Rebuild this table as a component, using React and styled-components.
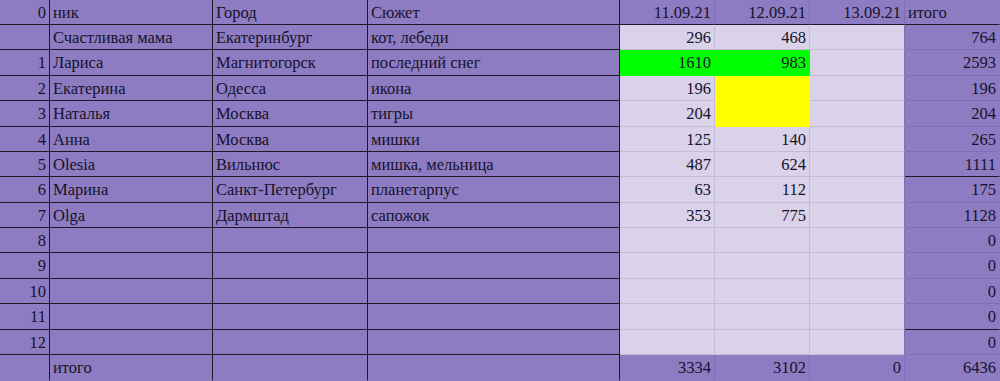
import styled, { createGlobalStyle } from 'styled-components'

const GlobalStyle = createGlobalStyle`
  html, body {
    margin: 0;
    padding: 0;
    background: #8e7cc3;
  }
`

const fills = {
  purple: '#8e7cc3',
  light: '#d9d2e9',
  green: '#00ff00',
  yellow: '#ffff00',
}

const lines = {
  black: '#1c1a24',
  grid: '#c4bcd6',
  soft: '#7f6db6',
}

const Sheet = styled.div`
  display: grid;
  grid-template-columns: 50px 163px 155px 252px 95px 95px 95px 95px;
  grid-template-rows: 25px 25px 26px 25px 26px 25px 25px 26px 25px 25px 26px 25px 26px 25px 26px;
  width: 1000px;
  height: 381px;
  font-family: 'Liberation Serif', 'Times New Roman', serif;
  font-size: 16.5px;
  color: #15132a;
`

const Cell = styled.div`
  display: flex;
  align-items: center;
  justify-content: ${(p) => (p.$num ? 'flex-end' : 'flex-start')};
  padding: 1px 3px 0 3px;
  box-sizing: border-box;
  white-space: nowrap;
  overflow: hidden;
  background: ${(p) => fills[p.$fill]};
  border-right: 1px solid ${(p) => (p.$right === 'none' ? fills[p.$fill] : lines[p.$right])};
  border-bottom: 1px solid ${(p) => (p.$bottom === 'none' ? fills[p.$fill] : lines[p.$bottom])};
`

const rows = [
  { n: '0', nick: 'ник', city: 'Город', plot: 'Сюжет', days: ['11.09.21', '12.09.21', '13.09.21'], total: 'итого' },
  { n: '', nick: 'Счастливая мама', city: 'Екатеринбург', plot: 'кот, лебеди', days: ['296', '468', ''], total: '764' },
  { n: '1', nick: 'Лариса', city: 'Магнитогорск', plot: 'последний снег', days: ['1610', '983', ''], total: '2593', marks: ['green', 'green'] },
  { n: '2', nick: 'Екатерина', city: 'Одесса', plot: 'икона', days: ['196', '', ''], total: '196', marks: [null, 'yellow'] },
  { n: '3', nick: 'Наталья', city: 'Москва', plot: 'тигры', days: ['204', '', ''], total: '204', marks: [null, 'yellow'] },
  { n: '4', nick: 'Анна', city: 'Москва', plot: 'мишки', days: ['125', '140', ''], total: '265' },
  { n: '5', nick: 'Olesia', city: 'Вильнюс', plot: 'мишка, мельница', days: ['487', '624', ''], total: '1111' },
  { n: '6', nick: 'Марина', city: 'Санкт-Петербург', plot: 'планетарпус', days: ['63', '112', ''], total: '175' },
  { n: '7', nick: 'Olga', city: 'Дармштад', plot: 'сапожок', days: ['353', '775', ''], total: '1128' },
  { n: '8', nick: '', city: '', plot: '', days: ['', '', ''], total: '0' },
  { n: '9', nick: '', city: '', plot: '', days: ['', '', ''], total: '0' },
  { n: '10', nick: '', city: '', plot: '', days: ['', '', ''], total: '0' },
  { n: '11', nick: '', city: '', plot: '', days: ['', '', ''], total: '0' },
  { n: '12', nick: '', city: '', plot: '', days: ['', '', ''], total: '0' },
  { n: '', nick: 'итого', city: '', plot: '', days: ['3334', '3102', '0'], total: '6436' },
]

const last = rows.length - 1
const blackTotals = [0, 6, 12]

const App = () => (
  <>
    <GlobalStyle />
    <Sheet>
      {rows.map((r, i) => {
        const edge = i === last ? 'none' : 'black'
        const inner = i > 0 && i < last
        return [
          <Cell key={`${i}a`} $num $fill='purple' $right='black' $bottom={edge}>{r.n}</Cell>,
          <Cell key={`${i}b`} $fill='purple' $right='black' $bottom={edge}>{r.nick}</Cell>,
          <Cell key={`${i}c`} $fill='purple' $right='black' $bottom={edge}>{r.city}</Cell>,
          <Cell key={`${i}d`} $fill='purple' $right='black' $bottom={edge}>{r.plot}</Cell>,
          ...r.days.map((d, j) => {
            const mark = r.marks && r.marks[j]
            const fill = mark || (inner ? 'light' : 'purple')
            let bottom = inner ? 'grid' : i === 0 ? 'black' : 'none'
            let right = j === 2 ? 'soft' : inner ? 'grid' : 'soft'
            if (mark) {
              bottom = 'none'
              right = 'none'
            }
            return (
              <Cell key={`${i}d${j}`} $num $fill={fill} $right={right} $bottom={bottom}>
                {d}
              </Cell>
            )
          }),
          <Cell
            key={`${i}h`}
            $num={i > 0}
            $fill='purple'
            $right='none'
            $bottom={blackTotals.includes(i) ? 'black' : i === last ? 'none' : 'soft'}
          >
            {r.total}
          </Cell>,
        ]
      })}
    </Sheet>
  </>
)

export default App
